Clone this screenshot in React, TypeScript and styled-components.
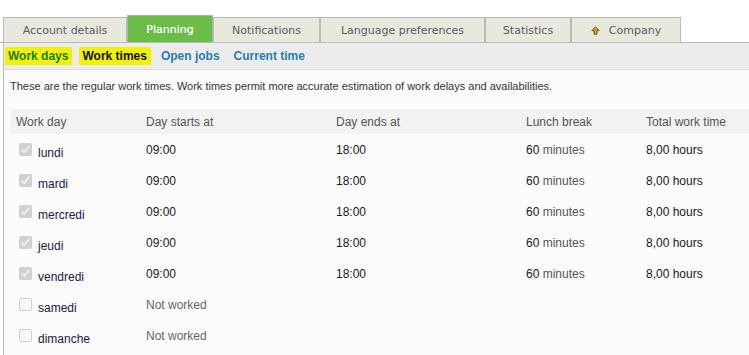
import React from "react";
import styled, {createGlobalStyle} from "styled-components";

const GlobalStyle = createGlobalStyle`
  html, body {
    margin: 0;
    background: #fff;
    font-family: "Liberation Sans", Arial, sans-serif;
  }
`

const Page = styled.div`
  padding-top: 15px;
  width: 749px;
  overflow: hidden;
`

const TabBar = styled.div`
  display: flex;
  align-items: flex-end;
  padding-left: 3px;
  height: 27px;
  border-bottom: 1px solid #bbb;
`

const Tab = styled.div<{ $active?: boolean; $w: number }>`
  display: flex;
  align-items: center;
  justify-content: center;
  gap: 9px;
  box-sizing: border-box;
  width: ${p => p.$w}px;
  height: ${p => p.$active ? 27 : 25}px;
  border: 1px solid ${p => p.$active ? '#a9b99f' : '#bbb'};
  border-bottom: none;
  background: ${p => p.$active ? '#6abd46' : '#e8e8dc'};
  color: ${p => p.$active ? '#fff' : '#5a5a66'};
  font-family: "DejaVu Sans", Verdana, sans-serif;
  font-size: 11px;
  white-space: nowrap;
  text-shadow: ${p => p.$active ? '0 0 0.4px #fff' : 'none'};
`

const Panel = styled.div`
  margin-left: 3px;
  border-left: 1px solid #bbb;
`

const SubNav = styled.div`
  display: flex;
  align-items: center;
  gap: 14px;
  height: 26px;
  padding-left: 4px;
  background: #ececec;
  border-bottom: 1px solid #ddd;
`

const SubLink = styled.span<{ $tone: 'green' | 'black' | 'blue'; $marked?: boolean }>`
  font-size: 12px;
  font-weight: bold;
  line-height: 18px;
  padding: 0 ${p => p.$marked ? 4 : 0}px 0 ${p => p.$marked ? 3 : 0}px;
  margin: 0 ${p => p.$marked ? -4 : 0}px 0 ${p => p.$marked ? -3 : 0}px;
  background: ${p => p.$marked ? '#f2f200' : 'transparent'};
  color: ${p => p.$tone === 'green' ? '#1b7d1b' : p.$tone === 'black' ? '#111' : '#2a7bbd'};
`

const Body = styled.div`
  background: #fcfcfc;
  padding: 10px 0 0 6px;
  min-height: 290px;
`

const Intro = styled.p`
  margin: 0 0 16px;
  font-size: 11px;
  line-height: 13px;
  color: #333;
`

const Grid = styled.div`
  display: grid;
  grid-template-columns: 130px 190px 190px 120px 1fr;
`

const Head = styled.div`
  height: 25px;
  display: flex;
  align-items: center;
  padding-left: 6px;
  background: #f2f2f2;
  color: #555;
  font-size: 12px;
`

const Cell = styled.div<{ $muted?: boolean }>`
  height: 31px;
  padding: 9px 0 0 6px;
  box-sizing: border-box;
  font-size: 12px;
  line-height: 14px;
  color: ${p => p.$muted ? '#666' : '#1a1a1a'};
`

const DayCell = styled.label`
  height: 31px;
  display: flex;
  align-items: center;
  padding: 6px 0 0 9px;
  box-sizing: border-box;
  font-size: 12px;
  color: #20204a;
  gap: 6px;
`

const Box = styled.input`
  width: 13px;
  height: 13px;
  margin: 0;
  position: relative;
  top: -3px;
`

const Unit = styled.span`
  color: #555;
`

function CompanyIcon() {
    return (
        <svg width="9" height="9" viewBox="0 0 9 9">
            <path d="M4.5 0.8 L8.2 4.6 L6 4.6 L6 8.2 L3 8.2 L3 4.6 L0.8 4.6 Z"
                  fill="#d9a21c" stroke="#6b4a10" strokeWidth="0.9" strokeLinejoin="round"/>
        </svg>
    );
}

const days = [
    {name: 'lundi', on: true},
    {name: 'mardi', on: true},
    {name: 'mercredi', on: true},
    {name: 'jeudi', on: true},
    {name: 'vendredi', on: true},
    {name: 'samedi', on: false},
    {name: 'dimanche', on: false},
];

function App() {
    return (
        <Page>
            <GlobalStyle/>
            <TabBar>
                <Tab $w={124}>Account details</Tab>
                <Tab $w={86} $active>Planning</Tab>
                <Tab $w={107}>Notifications</Tab>
                <Tab $w={165}>Language preferences</Tab>
                <Tab $w={86}>Statistics</Tab>
                <Tab $w={110}><CompanyIcon/>Company</Tab>
            </TabBar>
            <Panel>
                <SubNav>
                    <SubLink $tone='green' $marked>Work days</SubLink>
                    <SubLink $tone='black' $marked>Work times</SubLink>
                    <SubLink $tone='blue'>Open jobs</SubLink>
                    <SubLink $tone='blue'>Current time</SubLink>
                </SubNav>
                <Body>
                    <Intro>
                        These are the regular work times. Work times permit more accurate estimation of work delays and availabilities.
                    </Intro>
                    <Grid>
                        <Head>Work day</Head>
                        <Head>Day starts at</Head>
                        <Head>Day ends at</Head>
                        <Head>Lunch break</Head>
                        <Head>Total work time</Head>
                        {days.map(d => (
                            <React.Fragment key={d.name}>
                                <DayCell>
                                    <Box type='checkbox' checked={d.on} disabled readOnly/>
                                    {d.name}
                                </DayCell>
                                {d.on ? (
                                    <>
                                        <Cell>09:00</Cell>
                                        <Cell>18:00</Cell>
                                        <Cell>60 <Unit>minutes</Unit></Cell>
                                        <Cell>8,00 hours</Cell>
                                    </>
                                ) : (
                                    <>
                                        <Cell $muted>Not worked</Cell>
                                        <Cell/>
                                        <Cell/>
                                        <Cell/>
                                    </>
                                )}
                            </React.Fragment>
                        ))}
                    </Grid>
                </Body>
            </Panel>
        </Page>
    );
}

export default App;
